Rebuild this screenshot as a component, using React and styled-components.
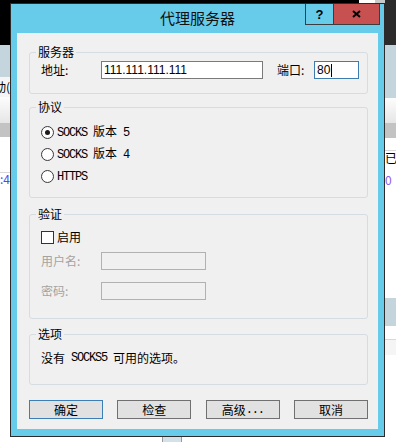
import styled, { createGlobalStyle } from 'styled-components'

const GlobalStyle = createGlobalStyle`
  html, body { margin: 0; padding: 0; }
  body {
    width: 396px;
    height: 442px;
    overflow: hidden;
    background: #fff;
    font-family: "Noto Sans CJK SC", "Liberation Sans", sans-serif;
    font-size: 12px;
    color: #000;
  }
`

const Desktop = styled.div`
  width: 396px;
  height: 442px;
  display: grid;
  grid-template-columns: 10px 375px 11px;
  grid-template-rows: 3px 434px 5px;
  overflow: hidden;
`

const TopEdge = styled.div`
  grid-column: 1 / 4;
  background: linear-gradient(to right, #000 0 359px, #fff 359px 375px, #c9c9c9 375px 385px, #2b2b2b 385px);
`

const BottomEdge = styled.div`
  grid-column: 1 / 4;
  background: #fff;
  display: flex;
  padding-left: 162px;
`

const TrayBox = styled.div`
  width: 18px;
  background: #d4e1e8;
  border-left: 1px solid #9a9a9a;
  border-right: 1px solid #9a9a9a;
`

const Strip = styled.div`
  display: flex;
  flex-direction: column;
  overflow: hidden;
`

const Band = styled.div`
  flex: ${p => (p.$h ? `0 0 ${p.$h}px` : '1 1 auto')};
  background: ${p => p.$bg || '#fff'};
  display: flex;
  align-items: center;
  justify-content: ${p => (p.$end ? 'flex-end' : 'flex-start')};
  white-space: nowrap;
  overflow: hidden;
  font-size: 12px;
  line-height: 12px;
  color: ${p => p.$color || '#000'};
  border-bottom: ${p => (p.$line ? '1px solid #d8d8d8' : 'none')};
`

const Dialog = styled.div`
  border: 1px solid #2b2b2b;
  background: #67cbea;
  display: flex;
  flex-direction: column;
`

const TitleBar = styled.div`
  height: 29px;
  display: grid;
  grid-template-columns: 1fr auto 1fr;
`

const Title = styled.div`
  grid-column: 2;
  align-self: center;
  font-size: 15px;
  line-height: 20px;
  margin-top: -1px;
  color: #111;
`

const CaptionButtons = styled.div`
  grid-column: 3;
  justify-self: end;
  align-self: start;
  margin-right: 4px;
  display: flex;
  border: 1px solid #3c3c3c;
  border-top: none;
`

const CaptionButton = styled.div`
  width: ${p => p.$w}px;
  height: 20px;
  background: ${p => p.$bg};
  border-left: ${p => (p.$divider ? '1px solid #3c3c3c' : 'none')};
  display: flex;
  align-items: center;
  justify-content: center;
  font-family: "Liberation Sans", sans-serif;
  font-weight: bold;
  font-size: 13px;
  color: #000;
`

const Client = styled.div`
  margin: 0 6px 7px;
  height: 396px;
  box-sizing: border-box;
  background: #f0f0f0;
  padding: 12px 10px 10px 12px;
  display: flex;
  flex-direction: column;
`

const GroupBox = styled.fieldset`
  margin: ${p => p.$mt || 0}px 0 0;
  padding: ${p => p.$pt}px 11px ${p => p.$pb}px;
  border: 1px solid #d5dde3;
  border-radius: 3px;
  min-width: 0;
  display: flex;
  flex-direction: column;
`

const Legend = styled.legend`
  margin-left: -5px;
  padding: 0 2px;
  font-size: 12px;
  line-height: 14px;
`

const Row = styled.div`
  height: ${p => p.$h || 18}px;
  display: flex;
  align-items: center;
  margin-bottom: ${p => p.$mb || 0}px;
`

const Label = styled.span`
  width: ${p => p.$w}px;
  margin-left: ${p => p.$ml || 0}px;
  flex: none;
  line-height: 16px;
  color: ${p => (p.$disabled ? '#a3a3a3' : '#000')};
`

const TextBox = styled.div`
  width: ${p => p.$w}px;
  height: 18px;
  box-sizing: border-box;
  flex: none;
  border: 1px solid ${p => (p.$focused ? '#3f7cae' : p.$disabled ? '#b1b1b1' : '#7a7a7a')};
  background: ${p => (p.$disabled ? '#f0f0f0' : '#fff')};
  padding-left: 2px;
  display: flex;
  align-items: center;
  font-family: "Liberation Sans", sans-serif;
  font-size: 12px;
  line-height: 14px;
`

const Caret = styled.span`
  width: 1px;
  height: 13px;
  background: #000;
  margin-left: 1px;
`

const Latin = styled.span`
  font-family: "Liberation Mono", monospace;
  font-size: 12px;
  letter-spacing: -1.2px;
  white-space: pre;
`

const OptionRow = styled.div`
  height: 22px;
  display: flex;
  align-items: center;
  gap: 3px;
  line-height: 16px;
`

const Radio = styled.span`
  width: 13px;
  height: 13px;
  box-sizing: border-box;
  border-radius: 50%;
  border: 1px solid #3a3a3a;
  background: radial-gradient(circle, #fff 0 55%, #f0f0f0 100%);
  display: flex;
  align-items: center;
  justify-content: center;
  flex: none;

  &::after {
    content: '';
    width: 5px;
    height: 5px;
    border-radius: 50%;
    background: #1b1b1b;
    display: ${p => (p.$checked ? 'block' : 'none')};
  }
`

const Checkbox = styled.span`
  width: 13px;
  height: 13px;
  box-sizing: border-box;
  border: 1px solid #333;
  background: #fff;
  flex: none;
`

const Note = styled.div`
  height: 16px;
  line-height: 16px;
  display: flex;
  align-items: center;
`

const ButtonBar = styled.div`
  margin-top: 15px;
  display: flex;
  justify-content: space-between;
`

const Button = styled.div`
  width: 74px;
  height: 19px;
  box-sizing: border-box;
  border: 1px solid ${p => (p.$default ? '#3b7fb6' : '#707070')};
  background: #e1e1e1;
  display: flex;
  align-items: center;
  justify-content: center;
  font-size: 12px;
  line-height: 16px;
`

function App() {
  return (
    <>
      <GlobalStyle />
      <Desktop>
        <TopEdge />

        <Strip>
          <Band $h={42} $bg="#000" />
          <Band $h={32} $bg="#c4d5dd" />
          <Band $h={20} $bg="#f5f5f5" $end>自动(</Band>
          <Band $h={26} $bg="linear-gradient(#fdfdfd, #e6e6e6)" />
          <Band $h={14} $bg="#c3c3c3" />
          <Band $h={35} $line />
          <Band $h={12} $end $color="#4b4bf0">ort:4</Band>
          <Band />
        </Strip>

        <Dialog>
          <TitleBar>
            <Title>代理服务器</Title>
            <CaptionButtons>
              <CaptionButton $w={27} $bg="#67cbea">?</CaptionButton>
              <CaptionButton $w={45} $bg="#c75050" $divider>
                <svg width="9" height="8" viewBox="0 0 9 8">
                  <path d="M1 1 L8 7 M8 1 L1 7" stroke="#000" strokeWidth="2" />
                </svg>
              </CaptionButton>
            </CaptionButtons>
          </TitleBar>

          <Client>
            <GroupBox $pt={2} $pb={14}>
              <Legend>服务器</Legend>
              <Row>
                <Label $w={60}>地址:</Label>
                <TextBox $w={162}>111.111.111.111</TextBox>
                <Label $w={37} $ml={14}>端口:</Label>
                <TextBox $w={45} $focused>80<Caret /></TextBox>
              </Row>
            </GroupBox>

            <GroupBox $mt={6} $pt={7} $pb={10}>
              <Legend>协议</Legend>
              <OptionRow>
                <Radio $checked />
                <span><Latin>SOCKS </Latin>版本<Latin> 5</Latin></span>
              </OptionRow>
              <OptionRow>
                <Radio />
                <span><Latin>SOCKS </Latin>版本<Latin> 4</Latin></span>
              </OptionRow>
              <OptionRow>
                <Radio />
                <span><Latin>HTTPS</Latin></span>
              </OptionRow>
            </GroupBox>

            <GroupBox $mt={9} $pt={8} $pb={18}>
              <Legend>验证</Legend>
              <Row $h={16} $mb={7}>
                <Checkbox />
                <Label $ml={3}>启用</Label>
              </Row>
              <Row $mb={12}>
                <Label $w={60} $disabled>用户名:</Label>
                <TextBox $w={105} $disabled />
              </Row>
              <Row>
                <Label $w={60} $disabled>密码:</Label>
                <TextBox $w={105} $disabled />
              </Row>
            </GroupBox>

            <GroupBox $mt={8} $pt={9} $pb={18}>
              <Legend>选项</Legend>
              <Note>没有<Latin> SOCKS5 </Latin>可用的选项。</Note>
            </GroupBox>

            <ButtonBar>
              <Button $default>确定</Button>
              <Button>检查</Button>
              <Button>高级<Latin>...</Latin></Button>
              <Button>取消</Button>
            </ButtonBar>
          </Client>
        </Dialog>

        <Strip>
          <Band $h={42} $bg="#2b2b2b" />
          <Band $h={53} $bg="#c4d5dd" />
          <Band $h={25} $bg="linear-gradient(#fdfdfd, #e6e6e6)" />
          <Band $h={15} $bg="#c3c3c3" />
          <Band $h={12} $line />
          <Band $h={14}>已会</Band>
          <Band $h={10} />
          <Band $h={10} $color="#8a5cf0">0</Band>
          <Band $h={113} />
          <Band $h={28} $bg="#c4d6dc" />
          <Band $h={13} $line />
          <Band $h={15} $bg="#f5f5f5" />
          <Band />
        </Strip>

        <BottomEdge>
          <TrayBox />
        </BottomEdge>
      </Desktop>
    </>
  )
}

export default App
